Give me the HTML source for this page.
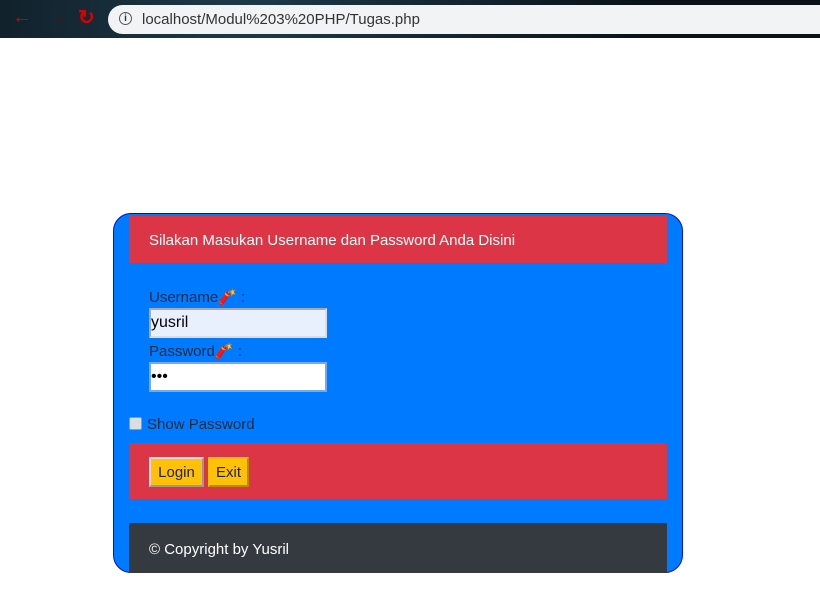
<!DOCTYPE html>
<html><head><style>
body{margin:0;width:820px;height:607px;background:#fff;font-family:"Liberation Sans",sans-serif;position:relative;overflow:hidden}
.bar{position:absolute;left:0;top:0;width:820px;height:38px;background:radial-gradient(circle at 30% 40%,#1d3a4a,#0a1218 70%);}
.addr{position:absolute;left:108px;top:5px;width:730px;height:29px;background:#f1f3f4;border-radius:15px;font-size:15px;color:#333;line-height:29px;}
.abs{position:absolute}
.card{position:absolute;left:113px;top:213px;width:568px;height:358px;background:#007bff;border:1px solid #0011cc;border-radius:18px;overflow:hidden}
.t{font-size:15px;color:#1b2a3a}
input.f{position:absolute;width:174px;height:26px;border:2px solid #a9a9a9;border-right-color:#ddd;border-bottom-color:#ddd;box-sizing:content-box;padding:0;font-size:16px;font-family:"Liberation Sans",sans-serif;outline:none}
.btn{position:absolute;top:457px;height:30px;background:#ffc107;font-size:15px;line-height:28px;text-align:center;box-sizing:border-box;color:#222}
</style></head><body>
<div class="bar">
<span class="abs" style="left:12px;top:6px;color:#c00;font-size:20px">&#8592;</span>
<span class="abs" style="left:46px;top:6px;color:#700;font-size:20px">&#8594;</span>
<span class="abs" style="left:78px;top:5px;color:#d00;font-size:20px;font-weight:bold">&#8635;</span>
<div class="addr"><span style="position:absolute;left:11px;top:7px;width:11px;height:11px;border:1.5px solid #555;border-radius:50%;font-size:10px;line-height:11px;text-align:center;font-weight:bold">i</span><span style="position:absolute;left:34px">localhost/Modul%203%20PHP/Tugas.php</span></div>
</div>
<div class="card"></div>
<div class="abs" style="left:129px;top:216px;width:538px;height:47px;background:#dc3545;color:#fff;font-size:15px;line-height:50px;"><span style="margin-left:20px">Silakan Masukan Username dan Password Anda Disini</span></div>
<div class="abs t" style="left:149px;top:288px">Username<span style="color:#e33">🧨</span> :</div>
<input class="f" style="left:149px;top:308px;background:#e8f0fe" value="yusril">
<div class="abs t" style="left:149px;top:342px">Password<span style="color:#e33">🧨</span> :</div>
<input class="f" style="left:149px;top:362px;background:#fff;border-color:#7aa7e8" type="password" value="abc">
<div class="abs" style="left:129px;top:417px;width:11px;height:11px;background:#ddd;border:1px solid #999;border-radius:2px"></div>
<div class="abs t" style="left:147px;top:416px">Show Password</div>
<div class="abs" style="left:129px;top:443px;width:538px;height:56px;background:#dc3545"></div>
<div class="btn" style="left:149px;width:55px;border:2px solid #ddd;border-right-color:#999;border-bottom-color:#999">Login</div>
<div class="btn" style="left:208px;width:41px;border:2px solid #ffc107;border-right-color:#b88a00;border-bottom-color:#b88a00">Exit</div>
<div class="abs" style="left:129px;top:523px;width:538px;height:50px;background:#343a40;color:#fff;font-size:15px;line-height:53px"><span style="margin-left:20px">© Copyright by Yusril</span></div>
</body></html>
